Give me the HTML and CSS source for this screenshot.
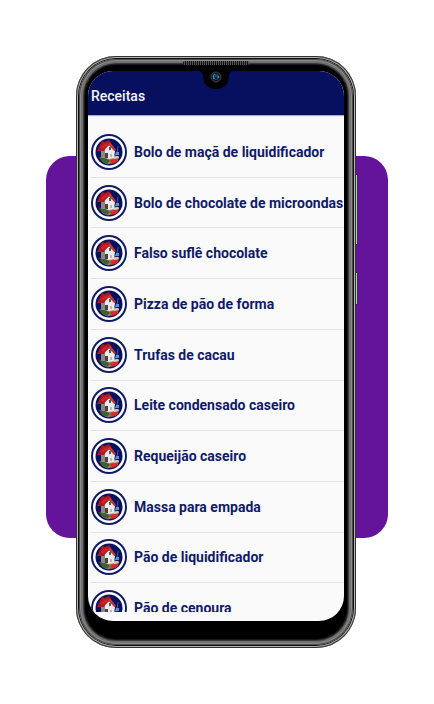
FILE: index.html
```html
<!DOCTYPE html>
<html lang="pt-BR">
<head>
    <meta charset="UTF-8">
    <meta name="viewport" content="width=device-width, initial-scale=1.0">
    <title>Receitas</title>
    <link rel="stylesheet" href="styles.css">
</head>
<body>
    <!-- recipe badge, used by every row -->
    <svg class="sprite" aria-hidden="true">
        <symbol id="house" viewBox="0 0 36 36">
            <circle cx="18" cy="18" r="18" fill="#101b66"/>
            <circle cx="18" cy="18" r="16" fill="#fff"/>
            <circle cx="18" cy="18" r="13.5" fill="#07105f"/>
            <path d="M9 23l8-2 11 1-2 5q-5 4-11 3-5-2-6-7z" fill="#8f8377"/>
            <path d="M8 23l6 0 5 4-3 3q-6-2-8-7z" fill="#3d6130"/>
            <path d="M19 26l9-2-1 3q-3 3-7 3z" fill="#dc2a25"/>
            <path d="M22 23l5-1 1 2-5 1z" fill="#d9cdbb"/>
            <path d="M10 17l8-6 6 6-1 7-5 1-8-2z" fill="#eceae8"/>
            <path d="M10 17l4-1v8l-4-1z" fill="#8e8585"/>
            <path d="M6 17l3-6 2-4 3 1 4-2 2 3-5 5-2 3z" fill="#b0161d"/>
            <path d="M10 13l5-4 2 1-5 5z" fill="#d3232a"/>
            <path d="M19 8l6 8-2 1-5-6-4 4z" fill="#c33935"/>
            <path d="M18 13h2v3h-2z" fill="#55535c"/>
            <path d="M14 19h3v5h-3z" fill="#4d4040"/>
            <path d="M19 20h2v3h-2z" fill="#b9b5b5"/>
            <path d="M27 12l-1 7" stroke="#315fa6" fill="none"/>
            <path d="M25 18h3v3h-4z" fill="#5d91cb"/>
        </symbol>
    </svg>

    <main class="stage">
        <div class="backdrop"></div>
        <div class="phone">
            <span class="side-button volume"></span>
            <span class="side-button power"></span>
            <span class="speaker"></span>
            <div class="bezel">
                <div class="screen">
                    <svg class="notch" viewBox="0 0 36 19" aria-hidden="true">
                        <path d="M0 0h36q-5 0-5 5-1 13-13 13t-13-13q0-5-5-5z" fill="#000"/>
                        <circle cx="18" cy="6" r="5" fill="#111820" stroke="#3b3f43"/>
                        <circle cx="18" cy="6" r="3" fill="#18466d"/>
                        <path d="M16 8q-2-4 1-5M20 5l1 2" stroke="#4ba0d8" fill="none"/>
                        <circle cx="18" cy="7" r="1" fill="#081018"/>
                    </svg>
                    <header class="app-bar">
                        <h1>Receitas</h1>
                    </header>
                    <div class="list-view">
                        <ul class="recipes">
                            <li><svg class="badge"><use href="#house"/></svg><span>Bolo de maçã de liquidificador</span></li>
                            <li><svg class="badge"><use href="#house"/></svg><span>Bolo de chocolate de microondas</span></li>
                            <li><svg class="badge"><use href="#house"/></svg><span>Falso suflê chocolate</span></li>
                            <li><svg class="badge"><use href="#house"/></svg><span>Pizza de pão de forma</span></li>
                            <li><svg class="badge"><use href="#house"/></svg><span>Trufas de cacau</span></li>
                            <li><svg class="badge"><use href="#house"/></svg><span>Leite condensado caseiro</span></li>
                            <li><svg class="badge"><use href="#house"/></svg><span>Requeijão caseiro</span></li>
                            <li><svg class="badge"><use href="#house"/></svg><span>Massa para empada</span></li>
                            <li><svg class="badge"><use href="#house"/></svg><span>Pão de liquidificador</span></li>
                            <li><svg class="badge"><use href="#house"/></svg><span>Pão de cenoura</span></li>
                        </ul>
                    </div>
                </div>
            </div>
        </div>
    </main>
</body>
</html>
```

FILE: styles.css
```css
* {
    box-sizing: border-box;
}
body {
    margin: 0;
    background: #fff;
    font-family: Roboto, "Liberation Sans", sans-serif;
}
.sprite {
    position: absolute;
    width: 0;
    height: 0;
}
.stage {
    display: grid;
    justify-items: center;
    padding: 56px 46px;
}
.backdrop {
    grid-area: 1 / 1;
    width: 100%;
    max-width: 342px;
    margin: 100px 0 110px;
    border-radius: 24px;
    background: #63149b;
}
.phone {
    grid-area: 1 / 1;
    position: relative;
    width: 100%;
    max-width: 280px;
    margin-right: 2px;
    padding: 3px;
    border-radius: 40px;
    background: #111;
    box-shadow: inset 0 0 0 1px #333, inset 0 0 0 2px #b5b1ae;
}
.bezel {
    padding: 12px 9px 24px;
    border-radius: 37px;
    background: #000;
    box-shadow: inset 0 0 0 1px #4a4a4a, inset 0 0 0 2px #8c8c8c, inset 0 0 0 4px #707070, inset 0 0 0 5px #3a3a3a, inset 0 0 0 6px #181818;
}
.screen {
    position: relative;
    overflow: hidden;
    padding-bottom: 9px;
    border-radius: 25px;
    background: #fafafa;
}
.app-bar {
    display: flex;
    align-items: center;
    height: 44px;
    padding: 6px 3px 0;
    background: #07105f;
    box-shadow: 0 1px 1px #aaaec8;
}
h1 {
    margin: 0;
    color: #f4f4fa;
    font-size: 14px;
    font-weight: 500;
}
.notch {
    position: absolute;
    top: 0;
    left: 50%;
    width: 36px;
    height: 19px;
    transform: translateX(-50%);
}
.speaker {
    position: absolute;
    top: 5px;
    left: 50%;
    width: 66px;
    height: 4px;
    border-radius: 2px;
    background: repeating-linear-gradient(90deg, #111 0 1px, #555 1px 2px);
    transform: translateX(-50%);
    z-index: 1;
}
.side-button {
    position: absolute;
    right: -2px;
    width: 3px;
    border: 1px solid #333;
    background: #c9c5c0;
}
.volume {
    top: 118px;
    height: 71px;
}
.power {
    top: 216px;
    height: 33px;
}
.list-view {
    height: 497px;
    padding: 12px 0 0 3px;
    overflow: hidden;
}
.recipes {
    display: grid;
    grid-auto-rows: 1fr;
    height: 507px;
    margin: 0;
    padding: 0;
    list-style: none;
}
.recipes li {
    display: flex;
    align-items: center;
    gap: 7px;
    border-bottom: 1px solid #e2e2e2;
    color: #101b66;
    font-size: 14px;
    font-weight: 700;
    white-space: nowrap;
}
.badge {
    flex: none;
    width: 36px;
    height: 36px;
}
```
